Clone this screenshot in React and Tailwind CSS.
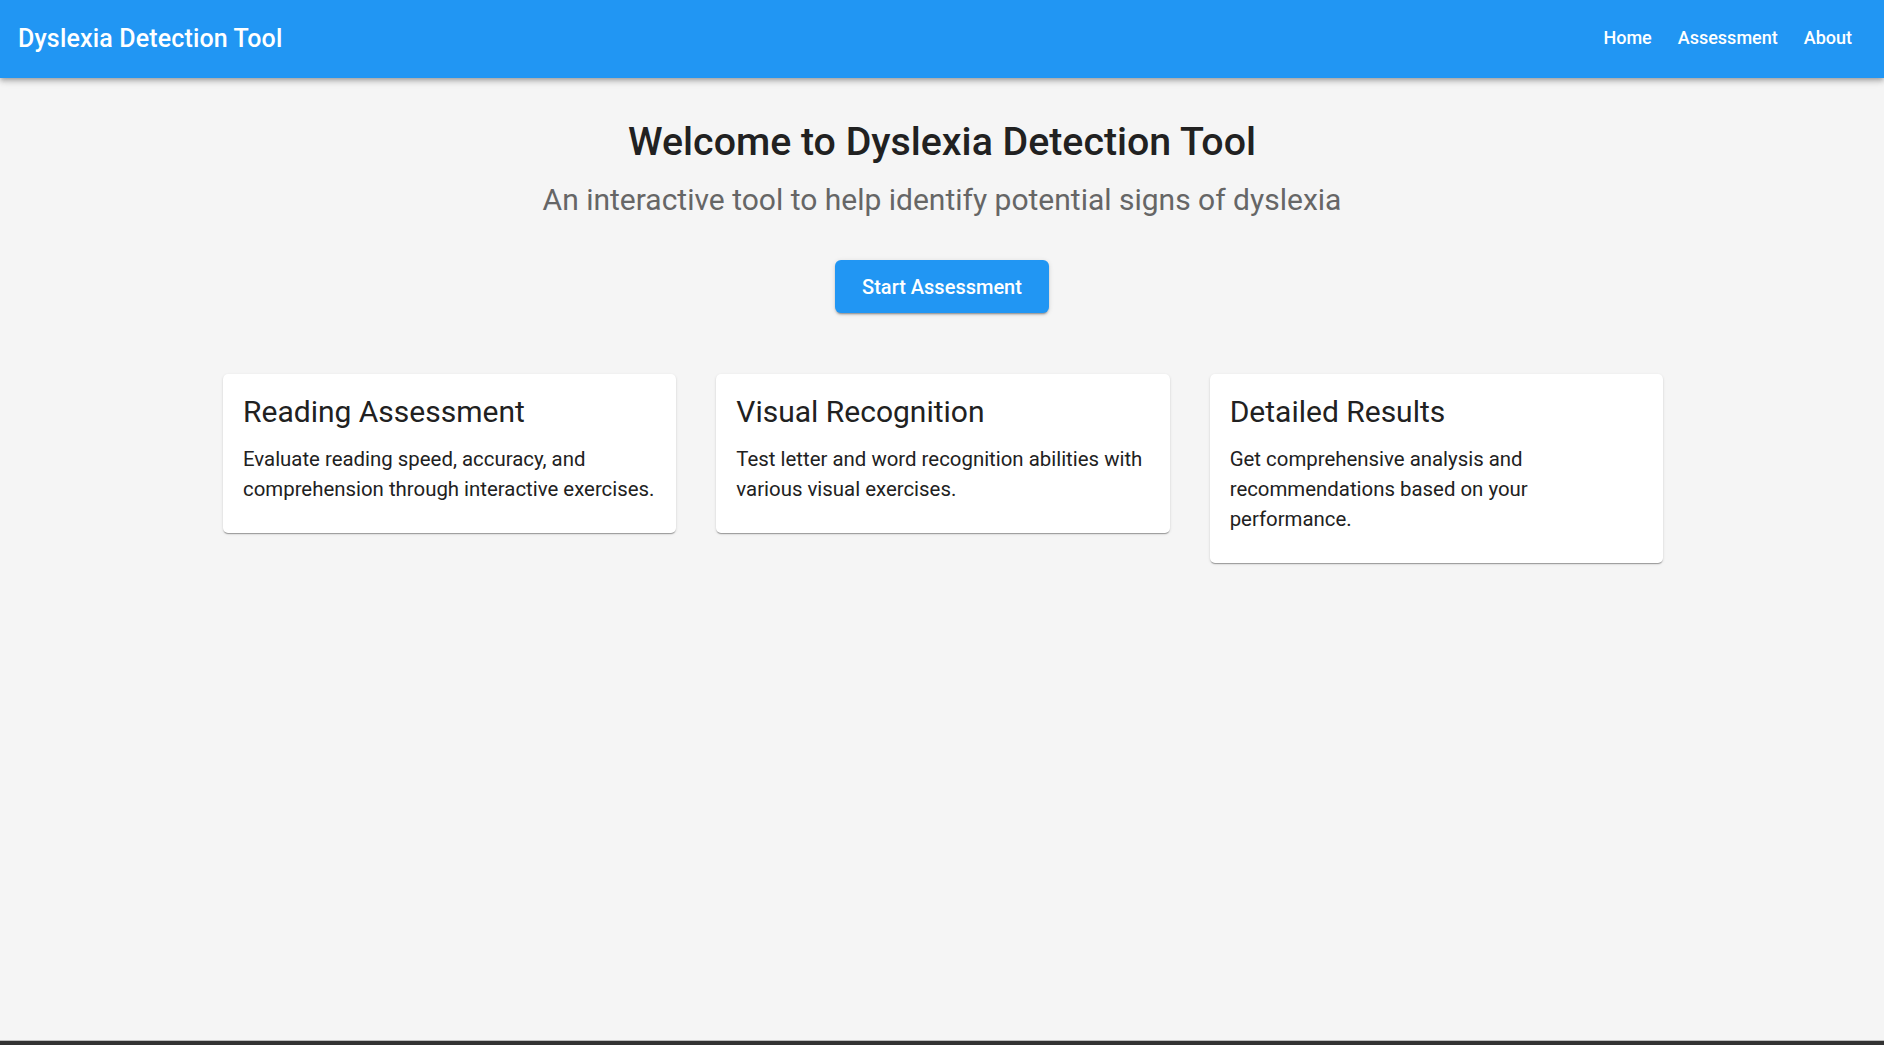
import React from "react";

const features = [
  {
    title: "Reading Assessment",
    text: "Evaluate reading speed, accuracy, and comprehension through interactive exercises.",
  },
  {
    title: "Visual Recognition",
    text: "Test letter and word recognition abilities with various visual exercises.",
  },
  {
    title: "Detailed Results",
    text: "Get comprehensive analysis and recommendations based on your performance.",
  },
];

const Header = () => {
  return (
    <header className="h-[78px] bg-[#2196f3] text-white flex items-center justify-between pl-[18px] pr-[22px] shadow-[0_2px_4px_-1px_rgba(0,0,0,0.2),0_4px_5px_0_rgba(0,0,0,0.14),0_1px_10px_0_rgba(0,0,0,0.12)] relative z-10">
      <h1 className="text-[25px] font-medium tracking-[0.15px]">Dyslexia Detection Tool</h1>
      <nav className="flex items-center gap-[6px] mb-[3px]">
        {["Home", "Assessment", "About"].map((item) => (
          <button key={item} className="text-[18px] font-medium px-[10px] py-[7px] rounded">
            {item}
          </button>
        ))}
      </nav>
    </header>
  );
};

const App = () => {
  return (
    <div className="min-h-screen flex flex-col bg-[#f5f5f5] font-['Roboto',sans-serif] text-[#212121]">
      <Header />
      <main className="flex-1 flex flex-col items-center pt-[40px]">
        <h2 className="text-[39.3px] font-medium leading-[48px] mb-[15px]">
          Welcome to Dyslexia Detection Tool
        </h2>
        <p className="text-[30px] leading-[38px] text-[#666666]">
          An interactive tool to help identify potential signs of dyslexia
        </p>
        <button className="mt-[41px] h-[53px] px-[27px] rounded-[6px] bg-[#2196f3] text-white text-[20px] font-medium shadow-[0_3px_1px_-2px_rgba(0,0,0,0.2),0_2px_2px_0_rgba(0,0,0,0.14),0_1px_5px_0_rgba(0,0,0,0.12)]">
          Start Assessment
        </button>
        <div className="mt-[61px] w-[1440px] translate-x-[1px] grid grid-cols-3 gap-[40px] items-start">
          {features.map((f) => (
            <div
              key={f.title}
              className="bg-white rounded-[5px] px-[20px] pt-[19px] pb-[29px] shadow-[0_2px_1px_-1px_rgba(0,0,0,0.2),0_1px_1px_0_rgba(0,0,0,0.14),0_1px_3px_0_rgba(0,0,0,0.12)]"
            >
              <h3 className="text-[30px] leading-[38px] mb-[13px]">{f.title}</h3>
              <p className="text-[20.4px] leading-[30px]">{f.text}</p>
            </div>
          ))}
        </div>
      </main>
      <div className="h-[5px] border-t border-[#bdbdbd] bg-[#333333]" />
    </div>
  );
};

export default App;
